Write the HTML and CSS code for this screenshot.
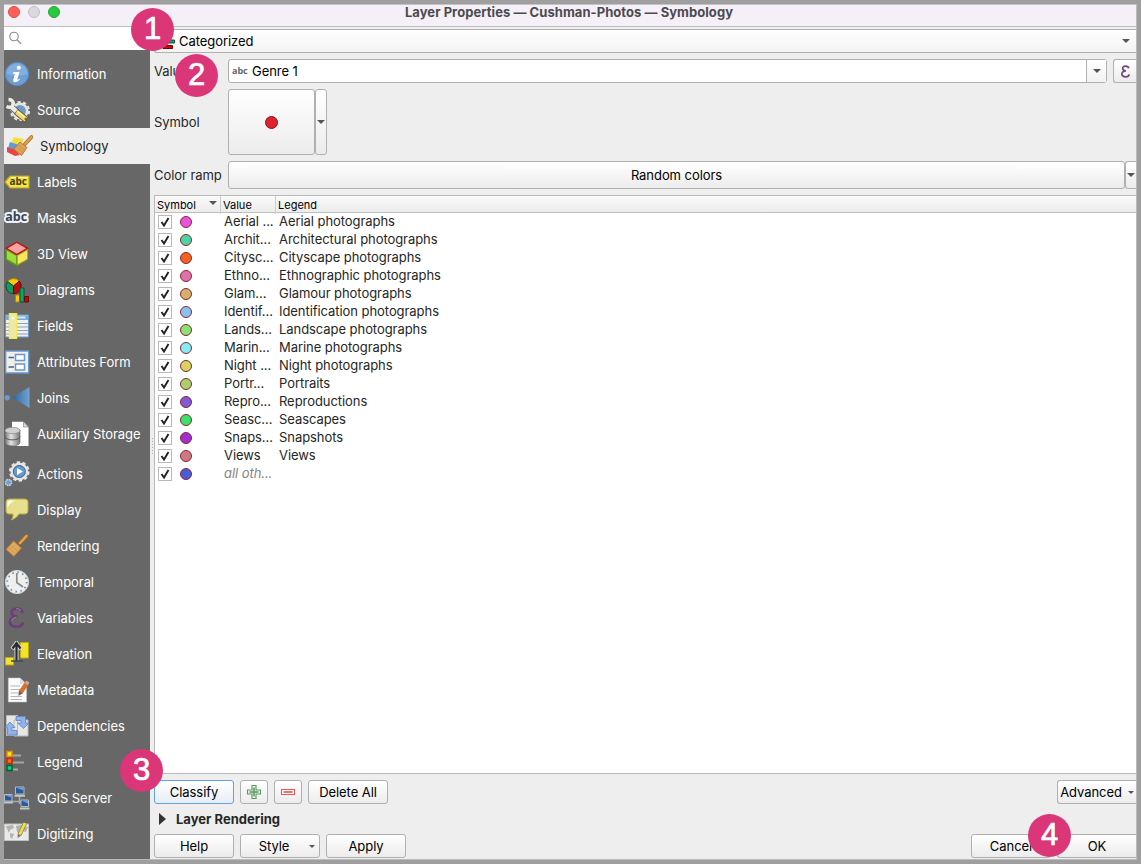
FILE: index.html
```html
<!DOCTYPE html>
<html lang="en">
<head>
<meta charset="utf-8">
<title>Layer Properties — Cushman-Photos — Symbology</title>
<link rel="stylesheet" href="styles.css">
</head>
<body>
<div class="window">
  <header class="titlebar">
    <div class="lights"><i class="light red"></i><i class="light grey"></i><i class="light green"></i></div>
    <div class="title">Layer Properties — Cushman-Photos — Symbology</div>
  </header>
  <div class="body">
    <nav class="sidebar">
      <div class="search"><svg width="14" height="14" viewBox="0 0 14 14"><circle cx="5" cy="5.500" r="4.300" fill="none" stroke="#8e8e8e" stroke-width="1.100"/><path d="M8 8.700 12 12.700" stroke="#8e8e8e" stroke-width="1.300"/></svg></div>
      <ul class="items">
        <li><svg viewBox="0 0 26 26"><circle cx="13" cy="13" r="11.7" fill="#6d9fd5" stroke="#5587c2"/><path d="M2.500 13a10.500 10.500 0 0 1 21 0q-10 3-21 0z" fill="#83afdf"/><circle cx="14.800" cy="6.800" r="2" fill="#fff"/><path d="M9.500 11h6l-2.200 7.500q0 .8 2.500-.8l.2.900q-2.500 2.600-4.900 2.600-2.500-.2-1.800-2.700l1.600-5.500H9z" fill="#fff"/></svg><span>Information</span></li>
        <li><svg viewBox="0 0 26 26"><circle cx="16" cy="14" r="7.200" fill="#6d9acb" stroke="#e5e5df" stroke-width="2.600"/><circle cx="16" cy="14" r="9.100" fill="none" stroke="#e5e5df" stroke-width="2" stroke-dasharray="3.200 2.520"/><path d="M7 9.500 13 15" stroke="#4c4c48" stroke-width="6"/><path d="M7 9.500 13 15" stroke="#ecece6" stroke-width="4.500"/><path d="M2.500 9.500Q8.500 12 9.300 6.200 8.500 2.500 4.500 2.500" fill="none" stroke="#ecece6" stroke-width="3.400"/><path d="M12 14.500 22.500 23" stroke="#665924" stroke-width="6.500"/><path d="M12.500 14.900 22 22.600" stroke="#efd77a" stroke-width="4.600"/><path d="M13 14 22.600 21.800" stroke="#fff0a8" stroke-width="1.300"/><circle cx="21.800" cy="22" r="1.400" fill="#776831"/></svg><span>Source</span></li>
        <li class="selected"><svg viewBox="0 0 26 26"><path d="M7 4 17 6 13 14 4 10z" fill="#f3df3f"/><path d="M3 9 12 12 9 19 1 15z" fill="#609dd8"/><path d="M0 14 9 17 13 22 8 23 0 19z" fill="#e84740"/><path d="M18 11 24.500 4" stroke="#a56a22" stroke-width="3.600" stroke-linecap="round"/><path d="M18 11 24.500 4" stroke="#e2a044" stroke-width="2.200" stroke-linecap="round"/><path d="M13 9 20 14.500 14.500 22.500 7 16z" fill="#dca358" stroke="#b57d3a"/><path d="m9.500 14 7 6M11.500 12l7 6" stroke="#c78d48" stroke-width=".7"/></svg><span>Symbology</span></li>
        <li><svg viewBox="0 0 26 26"><path d="M1 13 6 7H25V19H6z" fill="#f4e344" stroke="#c0a616" stroke-width="1.200"/><path d="M7 8.500h17" stroke="#fff79c"/><text x="5.600" y="16.300" class="tag" font-size="10">abc</text></svg><span>Labels</span></li>
        <li><svg viewBox="0 0 26 26"><text x="1.300" y="15.500" class="halo" font-size="12.500">abc</text></svg><span>Masks</span></li>
        <li><svg viewBox="0 0 26 26"><path d="M1.500 7.500V19L13 25.500 24 19V7.500z" fill="#5a951a"/><path d="M2.500 8.800 12.500 14.600V23.800L2.500 18.200z" fill="#99de3c" stroke="#5f9c1d"/><path d="M13.300 14.600 23.500 8.800V18.200L13.300 23.800z" fill="#f7e662" stroke="#bda317"/><path d="M12.800 1.200 23.500 7.300 12.800 13.500 2.200 7.300z" fill="#f6a2a2" stroke="#be1515" stroke-width="1.400"/></svg><span>3D View</span></li>
        <li><svg viewBox="0 0 26 26"><path d="M9.500 9 3.500 4.500A7.800 7.800 0 0 1 15.300 4z" fill="#f7cc09" stroke="#a48200"/><path d="M9.500 9 3.500 4.500A7.600 7.600 0 0 0 9.500 16.700z" fill="#149760" stroke="#075234"/><path d="M9.500 9 15.300 4A7.700 7.700 0 0 1 9.500 16.700z" fill="#b90b0b" stroke="#6a0808"/><path d="M11.500 18h4v7h-4z" fill="#fac315" stroke="#b18605"/><path d="M16 11h4v14h-4z" fill="#16a168" stroke="#065638"/><path d="M20.500 19.500h4V25h-4z" fill="#b90b0b" stroke="#6d0707"/></svg><span>Diagrams</span></li>
        <li><svg viewBox="0 0 26 26"><path d="M1.500 2h23v22h-23z" fill="#f0f0ec" stroke="#6c9bc9"/><path d="M2 2.500h22V7H2z" fill="#79a9d5"/><path d="M12.500 4.500h9" stroke="#d5e8f7" stroke-width="2"/><path d="M2 10.500h22M2 14h22M2 17.500h22M2 21h22" stroke="#8aa6bf" stroke-width="1.200"/><path d="M5.500 .5h7v25h-7z" fill="#ece8b0" stroke="#f5ed45" stroke-width="1.500"/><circle cx="9" cy="5" r="1.300" fill="#fff"/></svg><span>Fields</span></li>
        <li><svg viewBox="0 0 26 26"><path d="M1.700 2h23v22h-23z" fill="#efefeb" stroke="#6797cb" stroke-width="1.300"/><path d="M4.500 8.500H10M4.500 18H10" stroke="#4c6785" stroke-width="1.700"/><path d="M11.500 5.500h9v6h-9zM11.500 15h9v6h-9z" fill="#fff" stroke="#6898cd" stroke-width="1.500"/></svg><span>Attributes Form</span></li>
        <li><svg viewBox="0 0 26 26"><defs><linearGradient id="join"><stop stop-color="#2b659d"/><stop offset="1" stop-color="#71a3d2"/></linearGradient></defs><path d="M8 12.500 25.500 2V23z" fill="url(#join)"/><circle cx="3.200" cy="12.800" r="2.700" fill="#669bcf"/></svg><span>Joins</span></li>
        <li class="tall"><svg viewBox="0 0 26 26"><path d="M8 .8H19.500L24.500 6V25H8z" fill="#fff"/><path d="M19.500 .8V6h5z" fill="#d9d9d9" stroke="#777" stroke-width=".6"/><defs><linearGradient id="disk"><stop stop-color="#777"/><stop offset=".4" stop-color="#e4e4e4"/><stop offset="1" stop-color="#777"/></linearGradient></defs><path d="M1 9v12.500c0 4.500 15 4.500 15 0V9z" fill="url(#disk)" stroke="#666" stroke-width=".6"/><ellipse cx="8.500" cy="9.500" rx="7.500" ry="3.200" fill="#d2d2d2" stroke="#777" stroke-width=".6"/><path d="M1 15.500c0 4.500 15 4.500 15 0" fill="none" stroke="#555"/></svg><span>Auxiliary Storage</span></li>
        <li><svg viewBox="0 0 26 26"><circle cx="15.300" cy="10.500" r="7.600" fill="#6799d0" stroke="#e5e5e3" stroke-width="2.600"/><circle cx="15.300" cy="10.500" r="9.300" fill="none" stroke="#e5e5e3" stroke-width="2" stroke-dasharray="3.400 2.440"/><circle cx="15.300" cy="10.500" r="6" fill="none" stroke="#3e6798"/><path d="M13 7v7l6-3.500z" fill="#fff"/><circle cx="4.500" cy="21.500" r="3" fill="#6c9fd3" stroke="#c8ced3" stroke-width="1.600" stroke-dasharray="1.700 .6"/></svg><span>Actions</span></li>
        <li><svg viewBox="0 0 26 26"><path d="M5 2H21Q24 2 24 5V14Q24 17 21 17H15Q13 21 7.500 23 9.500 20 9 17H5Q2 17 2 14V5Q2 2 5 2z" fill="#e8df8c" stroke="#b9a93c"/><path d="M3.500 11V6q0-2.500 2.500-2.500h6q-6 1-8.500 7.500z" fill="#fff"/></svg><span>Display</span></li>
        <li><svg viewBox="0 0 26 26"><path d="M16 10 22.500 3" stroke="#a5671c" stroke-width="4" stroke-linecap="round"/><path d="M16 10 22.500 3" stroke="#e4a64c" stroke-width="2.400" stroke-linecap="round"/><path d="M9.500 8 17.500 15 10 23.500 2 16.500z" fill="#dfa85f" stroke="#b5772c"/><path d="m4.500 15 7.500 6.500M7 12.500l7 6" stroke="#c78d48" stroke-width=".7"/></svg><span>Rendering</span></li>
        <li><svg viewBox="0 0 26 26"><circle cx="13" cy="13" r="11.600" fill="#efefed" stroke="#d5d5d3"/><circle cx="13" cy="13" r="9.700" fill="none" stroke="#608fbd" stroke-width="1.700" stroke-dasharray="1.500 3.580"/><path d="M12.800 4V13.500L19 18" fill="none" stroke="#898989" stroke-width="1.700"/></svg><span>Temporal</span></li>
        <li><svg viewBox="0 0 26 26"><path d="M18.500 8Q18 3.500 12.500 3.700C5.500 4 5.800 11 13.500 11.700 4.500 11.700 3 21 11.500 21.700 16 22 18.500 20 19 17.500" fill="none" stroke="#6d3f78" stroke-width="2.700"/><path d="M17 5.500q-2-2.200-5-1.800M7.500 16q.7-3 5-4" fill="none" stroke="#9f80a8" stroke-width="1"/></svg><span>Variables</span></li>
        <li><svg viewBox="0 0 26 26"><path d="M16.500 1.500h8v15.500h-8zM1.500 16.500h8v7.500h-8z" fill="#f3e22e" stroke="#c1a909"/><path d="M12.500 20V4M8 8l4.500-6L17 8" fill="none" stroke="#d6d6d6" stroke-width="4"/><path d="M12.500 20V4M8.500 7.500 12.500 2l4 5.500" fill="none" stroke="#262d30" stroke-width="2.200"/><path d="M7 20h12" stroke="#41484a" stroke-width="1.500"/></svg><span>Elevation</span></li>
        <li><svg viewBox="0 0 26 26"><path d="M4.300 1H16L22.500 7V25H4.300z" fill="#fbfbfb" stroke="#c5c5c5" stroke-width=".6"/><path d="M16 1v6h6" fill="#ddd"/><path d="M6.500 9H16M6.500 12.500H16M6.500 16H15M6.500 19.500H18M6.500 22.500H18" stroke="#b6b6b6"/><path d="M16.500 15.500 23 6" stroke="#df6d2a" stroke-width="4.500"/><path d="m22.500 3.500 3 2-1.800 2.700-3.300-2.300z" fill="#c6a5a0"/><path d="m15 13.500 3.500 3L14.500 19z" fill="#696262"/></svg><span>Metadata</span></li>
        <li><svg viewBox="0 0 26 26"><path d="M2.500 2.500h11v20h-11zM10 7h14v16H10z" fill="#e7e7e5" stroke="#bbb"/><path d="M12 3.500h9.500V10h3.500l-5.500 5.500L13.500 10H17V7.500h-5z" fill="#8fb3ea" stroke="#5c86c6" stroke-width=".8"/><path d="M1 14.500 6 9l5 5.500H8v3h5v4.500H3.500v-7.500z" fill="#8fb3ea" stroke="#5c86c6" stroke-width=".8"/></svg><span>Dependencies</span></li>
        <li><svg viewBox="0 0 26 26"><path d="M9 6.500h8M9 13.500h11M9 20.500h5" stroke="#a6a6a6" stroke-width="1.800"/><path d="M3 2.500h5v5H3z" fill="#ffe51e" stroke="#e88b09" stroke-width="1.500"/><path d="M3 9.500h5v5H3z" fill="#ff6b10" stroke="#bd2c0b" stroke-width="1.500"/><path d="M3 16.500h5v5H3z" fill="#0bd477" stroke="#075d38" stroke-width="1.500"/></svg><span>Legend</span></li>
        <li><svg viewBox="0 0 26 26"><path d="M15.500 10v9M8 16.500h11" stroke="#aaa" stroke-width="1.500"/><g stroke="#b8bab9"><path d="M11.500 2h8.500v7h-8.500zM.500 9.500H8V16H.500zM17 15h7.500v6.500H17z" fill="#255b9f"/></g><path d="M12 2.500h7.500v3zM.500 10h7v2.500zM17.500 15.500h6.500v3z" fill="#769fcf"/><path d="M10.500 10.700H21M0 17.500h9M16 23.500h9.500" stroke="#c4c7c4" stroke-width="2"/></svg><span>QGIS Server</span></li>
        <li><svg viewBox="0 0 26 26"><path d="M.500 3h24v16.500H.500z" fill="#e9e9e7" stroke="#c2c2c0"/><path d="m2 5 7-1 1 3-4 2-1 3-2-4zM6 12l4 1-2 5-2-2zM12 5l5-1 7 2-2 5-4-1-1 5-4-4z" fill="#b2b4b2"/><path d="M15.500 14 21 2" stroke="#8e7f20" stroke-width="4"/><path d="M15.700 13.500 21 2" stroke="#f1df50" stroke-width="2.700"/><path d="m13.500 13 3.500 1.700-3.300 2.300z" fill="#777"/></svg><span>Digitizing</span></li>
      </ul>
    </nav>
    <main class="main">
      <div class="combo renderer">
        <svg class="cat" width="18" height="17" viewBox="0 0 18 17"><path d="M-1 2h9v3h-9z" fill="#f5c50d" stroke="#a28000"/><path d="M0 7h13.500v3H0z" fill="#17a06b" stroke="#065238"/><path d="M2 12.500h9.500v3H2z" fill="#c40b0b" stroke="#660606"/></svg>
        <span>Categorized</span><i class="arrow"></i>
      </div>
      <div class="row value-row">
        <label>Value</label>
        <div class="field"><small>abc</small><span>Genre 1</span><b><i class="arrow"></i></b></div>
        <button class="btn expr"><svg width="10" height="13" viewBox="0 0 10 13"><path d="M8.800 3.300Q8.300 1 5.500 1.100C1.500 1.300 1.700 5.500 6 6 1 6 .3 11.300 5 11.800 7.500 12 9 11 9.200 9.300" fill="none" stroke="#704a7c" stroke-width="1.700"/></svg></button>
      </div>
      <div class="row symbol-row">
        <label>Symbol</label>
        <button class="btn preview"><i class="marker"></i></button><button class="btn drop"><i class="arrow"></i></button>
      </div>
      <div class="row ramp-row">
        <label>Color ramp</label>
        <button class="btn ramp">Random colors</button><button class="btn drop open"><i class="arrow"></i></button>
      </div>
      <section class="table">
        <div class="thead"><div>Symbol<i class="arrow"></i></div><div>Value</div><div>Legend</div></div>
        <div class="tbody" id="rows"></div>
      </section>
      <div class="actions">
        <button class="btn wide focus">Classify</button>
        <button class="btn icon"><svg width="16" height="16" viewBox="0 0 16 16"><path d="M6 1.500h4v4.500h4.500v4H10v4.500H6V10H1.500V6H6z" fill="#f3f8f3" stroke="#5b955f" stroke-width="1.100"/><path d="M8 3.500v9M3.500 8h9" stroke="#5b955f" stroke-width="1.500"/></svg></button>
        <button class="btn icon"><svg width="16" height="16" viewBox="0 0 16 16"><path d="M1.500 5.500h13v5h-13z" fill="#fff" stroke="#ee5555" stroke-width="1.100"/><path d="M3.500 8h9" stroke="#ee5555" stroke-width="1.700"/></svg></button>
        <button class="btn wide">Delete All</button>
        <button class="btn advanced">Advanced<i class="arrow small"></i></button>
      </div>
      <div class="group"><i class="expand"></i>Layer Rendering</div>
      <footer class="footer">
        <button class="btn wide">Help</button>
        <button class="btn wide style">Style<i class="arrow small"></i></button>
        <button class="btn wide">Apply</button>
        <button class="btn wide cancel">Cancel</button>
        <button class="btn wide ok">OK</button>
      </footer>
      <i class="grip"></i>
    </main>
  </div>
</div>
<div class="badge one">1</div>
<div class="badge two">2</div>
<div class="badge three">3</div>
<div class="badge four">4</div>
<script src="rows.js"></script>
</body>
</html>
```
FILE: styles.css
```css
* { box-sizing: border-box; }
body { margin: 0; width: 1141px; height: 864px; overflow: hidden; position: relative; background: #9f9f9f; padding: 4px 4px 4px 4px; font: 13px/18px Inter, "Open Sans", sans-serif; letter-spacing: -0.06px; color: #262626; }
.window { width: 1133px; height: 856px; display: flex; flex-direction: column; background: #eee; overflow: hidden; border-right: 1px solid #bbb; border-bottom: 1px solid #bbb; }
.titlebar { height: 23px; flex: none; display: flex; position: relative; background: #f5f0f8; border-top: 1px solid #c5c3c6; border-bottom: 1px solid #bfbfbf; }
.lights { display: flex; gap: 8px; padding: 1px 0 0 4px; }
.light { width: 12px; height: 12px; border-radius: 50%; }
.red { background: #ff5f57; border: 1px solid #df4a43; }
.grey { background: #dcd8de; border: 1px solid #c2bec4; }
.green { background: #28c840; border: 1px solid #1fab2e; }
.title { width: 1130px; margin-left: -56px; text-align: center; font-weight: 700; line-height: 15px; color: #4d4a4f; letter-spacing: 0.05px; }
.body { flex: 1; display: flex; min-height: 0; }
.sidebar { width: 146px; flex: none; background: #676767; }
.search { height: 23px; background: #fff; padding: 4px 5px; }
.search svg { display: block; }
.items { list-style: none; margin: 0; padding: 6px 0 0; }
.items li { height: 36px; display: flex; align-items: center; gap: 7px; color: #fff; white-space: nowrap; }
.items svg { width: 26px; height: 26px; flex: none; }
.items .selected { background: #eee; color: #262626; padding-left: 3px; }
.items .tall { height: 40px; padding-bottom: 4px; }
.tag { font-family: "Open Sans", sans-serif; font-weight: 700; fill: #423d20; }
.halo { font-family: "Open Sans", sans-serif; font-weight: 700; fill: #384352; stroke: #edf1fa; stroke-width: 4px; stroke-linejoin: round; paint-order: stroke; }
.main { flex: 1; min-width: 0; display: flex; flex-direction: column; padding: 2px 0 0 4px; position: relative; }
.arrow { display: block; width: 0; height: 0; border: 4px solid transparent; border-top: 4px solid #555; border-bottom: 0; }
.arrow.small { border-width: 3px 3px 0; }
.combo { height: 24px; flex: none; display: flex; align-items: center; border: 1px solid #b0b0b0; border-right: 0; border-radius: 3px 0 0 3px; background: linear-gradient(#fff, #f3f3f3); padding: 0 6px; color: #000; }
.combo .arrow { margin-left: auto; }
.row { display: flex; align-items: center; flex: none; }
.row label { width: 74px; flex: none; }
.btn { font: inherit; letter-spacing: inherit; color: #000; padding: 0; margin: 0; height: 24px; flex: none; display: flex; align-items: center; justify-content: center; border: 1px solid #b0b0b0; border-radius: 3px; background: linear-gradient(#fff, #ececec); }
.value-row { height: 24px; margin-top: 6px; }
.field { width: 879px; height: 24px; display: flex; align-items: center; background: #fff; border: 1px solid #b0b0b0; border-radius: 3px; color: #000; padding-left: 3px; }
.field small { font: 700 9px/18px "Open Sans", sans-serif; color: #666; width: 20px; }
.field b { margin-left: auto; width: 20px; height: 22px; border-left: 1px solid #b0b0b0; display: flex; align-items: center; justify-content: center; background: linear-gradient(#fff, #f3f3f3); }
.expr { width: 23px; margin-left: 6px; border-right: 0; border-radius: 3px 0 0 3px; }
.symbol-row { height: 66px; margin-top: 6px; }
.preview { width: 87px; height: 66px; }
.marker { width: 13px; height: 13px; border-radius: 50%; background: #df212f; border: 1px solid #85131b; margin-right: 1px; }
.drop { width: 12px; height: 66px; }
.ramp-row { height: 28px; margin-top: 6px; }
.ramp { width: 897px; height: 28px; }
.drop.open { width: 11px; height: 28px; border-right: 0; border-radius: 3px 0 0 3px; }
.table { height: 579px; flex: none; margin-top: 6px; background: #fff; border: 1px solid #bababa; border-right: 0; }
.thead { height: 17px; display: grid; grid-template-columns: 66px 55px 1fr; font-size: 11px; line-height: 18px; letter-spacing: 0; color: #000; background: linear-gradient(#fafafa, #ececec); border-bottom: 1px solid #bfbfbf; }
.thead div { padding-left: 2px; border-right: 1px solid #ccc; display: flex; }
.thead div:last-child { border: 0; }
.thead .arrow { margin: 5px 3px 0 auto; }
.tbody { margin-top: -1px; }
.trow { height: 18px; display: grid; grid-template-columns: 20px 46px 55px 1fr; padding-left: 3px; align-items: center; white-space: nowrap; }
.trow em { color: #858585; }
.check { width: 14px; height: 14px; border: 1px solid #b9b9b9; background: #fff; display: block; margin-top: 2px; }
.check svg { display: block; }
.dot { width: 12px; height: 12px; border-radius: 50%; border: 1px solid #8f2430; margin: 1px 0 0 2px; }
.actions { display: flex; gap: 6px; margin-top: 6px; flex: none; }
.wide { width: 80px; }
.focus { border-color: #62a0e6; background: linear-gradient(#fff, #e7edf5); }
.icon { width: 28px; }
.advanced { width: 79px; margin-left: auto; border-right: 0; border-radius: 3px 0 0 3px; gap: 6px; }
.group { height: 30px; flex: none; display: flex; align-items: center; font-weight: 700; letter-spacing: 0.02px; padding-left: 5px; }
.expand { border: 6px solid transparent; border-left: 7px solid #333; border-right: 0; margin-right: 10px; }
.footer { display: flex; gap: 6px; flex: none; }
.style { position: relative; padding-right: 12px; }
.style .arrow { position: absolute; right: 4px; top: 10px; }
.cancel { margin-left: auto; }
.ok { width: 79px; border-right: 0; border-radius: 3px 0 0 3px; }
.grip { position: absolute; left: 1px; top: 410px; width: 3px; height: 18px; background: radial-gradient(circle, #aaa 0.6px, transparent 1px) 0 0 / 3px 3px; }
.badge { position: absolute; width: 43px; height: 43px; border-radius: 50%; background: #db3678; color: #fff; text-align: center; font: 31px/41px "Liberation Sans", sans-serif; -webkit-text-stroke: 0.7px #fff; }
.one { left: 131px; top: 8px; }
.two { left: 175px; top: 54px; }
.three { left: 120px; top: 749px; }
.four { left: 1028px; top: 814px; }
```
FILE: rows.js
```js
const rows = [
  ["#e653dc", "Aerial ...", "Aerial photographs"],
  ["#49d6a5", "Archit...", "Architectural photographs"],
  ["#f26322", "Citysc...", "Cityscape photographs"],
  ["#dc74ac", "Ethno...", "Ethnographic photographs"],
  ["#d3b06b", "Glam...", "Glamour photographs"],
  ["#89c1ee", "Identif...", "Identification photographs"],
  ["#86e374", "Lands...", "Landscape photographs"],
  ["#82eef4", "Marin...", "Marine photographs"],
  ["#d4d45e", "Night ...", "Night photographs"],
  ["#a8d16d", "Portr...", "Portraits"],
  ["#7f5ad6", "Repro...", "Reproductions"],
  ["#36e46a", "Seasc...", "Seascapes"],
  ["#9d30d2", "Snaps...", "Snapshots"],
  ["#cd7886", "Views", "Views"],
  ["#465dda", "<em>all oth...</em>", ""]
];
const tick = '<i class="check"><svg width="12" height="12" viewBox="0 0 12 12"><path d="M2.500 6 5 9.500 9.500 2" fill="none" stroke="#222" stroke-width="1.900"/></svg></i>';
document.getElementById("rows").innerHTML = rows.map(([color, value, legend]) =>
  `<div class="trow">${tick}<i class="dot" style="background:${color}"></i><span>${value}</span><span>${legend}</span></div>`).join("");
```
